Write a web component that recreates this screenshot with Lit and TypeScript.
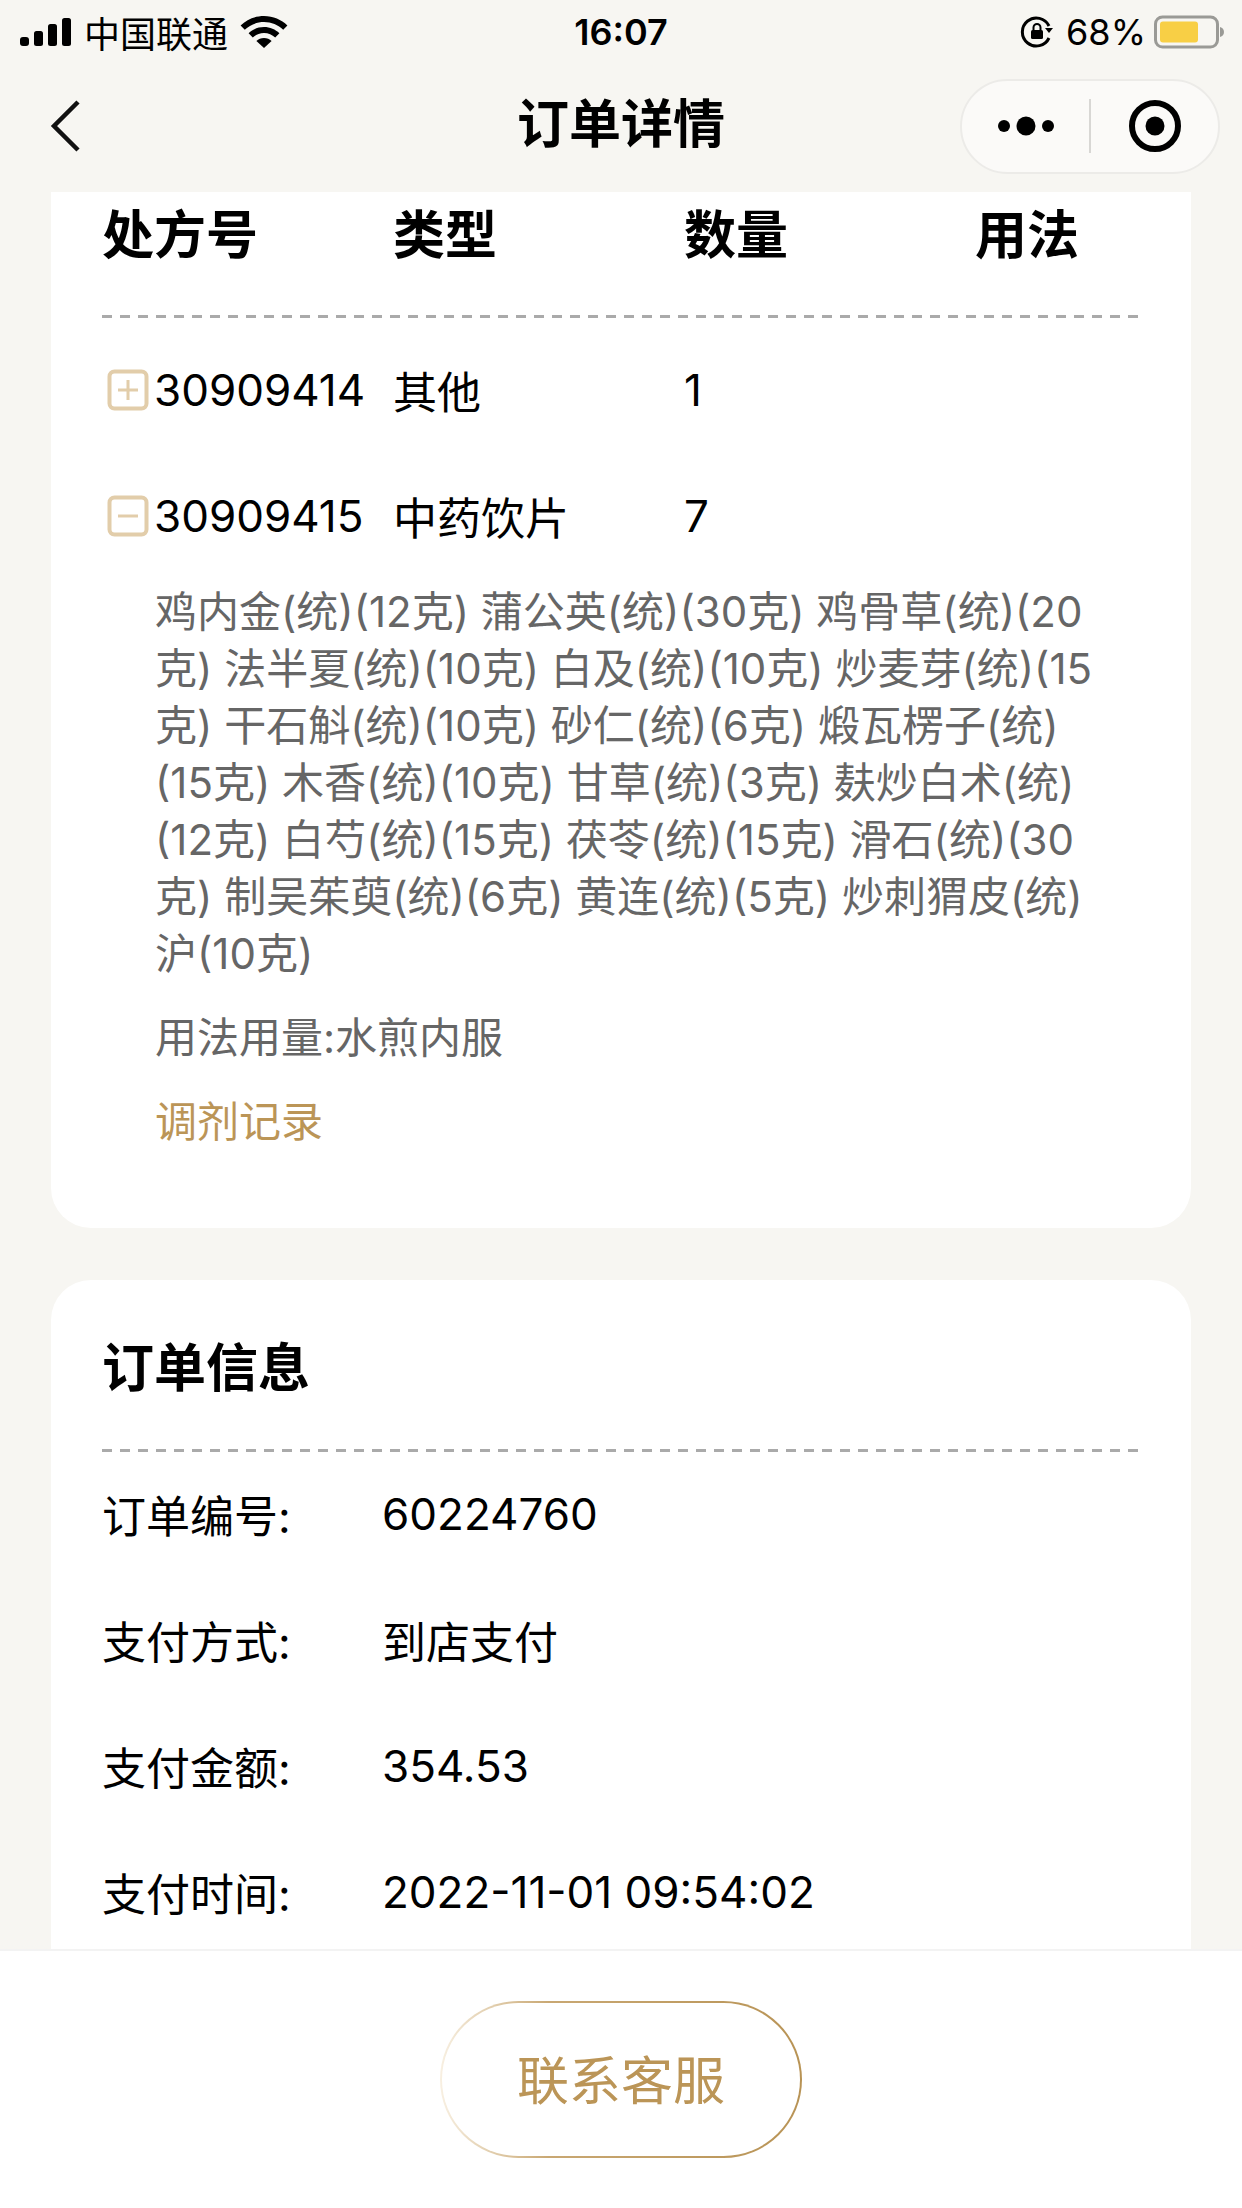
import { LitElement, html, css } from 'lit';
import { customElement } from 'lit/decorators.js';

const DETAIL_LINES = [
  '鸡内金(统)(12克) 蒲公英(统)(30克) 鸡骨草(统)(20',
  '克) 法半夏(统)(10克) 白及(统)(10克) 炒麦芽(统)(15',
  '克) 干石斛(统)(10克) 砂仁(统)(6克) 煅瓦楞子(统)',
  '(15克) 木香(统)(10克) 甘草(统)(3克) 麸炒白术(统)',
  '(12克) 白芍(统)(15克) 茯苓(统)(15克) 滑石(统)(30',
  '克) 制吴茱萸(统)(6克) 黄连(统)(5克) 炒刺猬皮(统)',
  '沪(10克)',
];

const ORDER_INFO = [
  ['订单编号:', '60224760'],
  ['支付方式:', '到店支付'],
  ['支付金额:', '354.53'],
  ['支付时间:', '2022-11-01 09:54:02'],
];

@customElement('app-root')
export class AppRoot extends LitElement {
  static styles = css`
    :host {
      display: flex;
      flex-direction: column;
      width: 1242px;
      height: 2208px;
      overflow: hidden;
      background: #f7f6f2;
      color: #000;
      font-family: 'Inter', 'Noto Sans CJK SC', sans-serif;
    }

    .status {
      height: 64px;
      flex: none;
      display: grid;
      grid-template-columns: 1fr auto 1fr;
      align-items: center;
      font-size: 36px;
    }
    .status-left {
      display: flex;
      align-items: center;
      padding-left: 20px;
      gap: 12px;
    }
    .status-right {
      display: flex;
      align-items: center;
      justify-content: flex-end;
      padding-right: 18px;
      gap: 12px;
    }
    .time {
      font-weight: 600;
      font-size: 36px;
    }
    .pct {
      margin-right: -4px;
    }

    .nav {
      height: 128px;
      flex: none;
      box-sizing: border-box;
      padding-bottom: 4px;
      display: grid;
      grid-template-columns: 1fr auto 1fr;
      align-items: center;
    }
    .back {
      padding-left: 50px;
      display: flex;
    }
    .title {
      font-size: 52px;
      font-weight: 700;
      line-height: 60px;
      margin-top: -2px;
    }
    .capsule-wrap {
      display: flex;
      justify-content: flex-end;
      padding-right: 22px;
    }
    .capsule {
      width: 260px;
      height: 95px;
      box-sizing: border-box;
      border: 2px solid #ecebe8;
      border-radius: 48px;
      background: #fbfaf8;
      display: grid;
      grid-template-columns: 1fr 2px 1fr;
      align-items: center;
      justify-items: center;
    }
    .capsule i {
      width: 2px;
      height: 54px;
      background: #d8d7d4;
    }

    .content {
      flex: 1;
      min-height: 0;
      overflow: hidden;
      display: flex;
      flex-direction: column;
      gap: 52px;
      padding: 0 51px;
    }
    .card {
      flex: none;
      background: #fff;
      padding: 0 51px;
    }
    .card-rx {
      border-radius: 0 0 40px 40px;
      padding-bottom: 78px;
    }
    .card-order {
      border-radius: 40px 40px 0 0;
      padding-bottom: 200px;
    }

    .dash {
      height: 3px;
      margin-bottom: -1px;
      background: repeating-linear-gradient(to right, #aaa 0 10px, transparent 10px 18px);
    }

    .cols {
      display: grid;
      grid-template-columns: 291px 291px 291px 1fr;
      align-items: center;
    }
    .thead {
      height: 123px;
      align-items: start;
      padding-top: 14px;
      box-sizing: border-box;
      font-size: 52px;
      line-height: 60px;
      font-weight: 700;
    }
    .rows {
      padding-top: 10px;
    }
    .row {
      height: 126px;
      font-size: 44px;
    }
    .rx-no {
      display: flex;
      align-items: center;
      gap: 5px;
      margin-left: 5px;
      margin-right: -20px;
    }

    .detail {
      padding: 4px 0 0 53px;
      color: #666;
      font-size: 42px;
      line-height: 57px;
    }
    .detail-line {
      white-space: pre;
    }
    .usage {
      margin-top: 27px;
    }
    .record {
      margin-top: 27px;
      color: #bb9557;
    }

    .order-title {
      height: 169px;
      box-sizing: border-box;
      padding-top: 59px;
      font-size: 52px;
      line-height: 60px;
      font-weight: 700;
    }
    .info-row {
      height: 126px;
      display: flex;
      align-items: center;
      font-size: 44px;
    }
    .info-label {
      width: 280px;
      flex: none;
    }

    .footer {
      height: 259px;
      flex: none;
      box-sizing: border-box;
      border-top: 2px solid #f3f3f3;
      background: #fff;
      display: flex;
      justify-content: center;
      padding-top: 50px;
    }
    .btn-border {
      width: 362px;
      height: 157px;
      box-sizing: border-box;
      padding: 2px;
      border-radius: 79px;
      background: linear-gradient(to right, #f8f0e2 0%, #c9a873 30%, #b89355 100%);
    }
    .btn {
      height: 100%;
      box-sizing: border-box;
      padding-bottom: 4px;
      border-radius: 77px;
      background: #fff;
      color: #bb9557;
      font-size: 52px;
      display: flex;
      align-items: center;
      justify-content: center;
    }
  `;

  renderBox(minus: boolean) {
    return html`<svg width="42" height="42" viewBox="0 0 42 42" fill="none" stroke="#e2cdaa">
      <rect x="2.5" y="2.5" width="37" height="37" rx="5" stroke-width="4"></rect>
      <path d="${minus ? 'M11 21H31' : 'M11 21H31M21 11V31'}" stroke-width="3"></path>
    </svg>`;
  }

  render() {
    return html`
      <div class="status">
        <div class="status-left">
          <svg width="52" height="28" viewBox="0 0 52 28" fill="#000">
            <rect x="0" y="19" width="9" height="9" rx="3"></rect>
            <rect x="14" y="13" width="9" height="15" rx="2.5"></rect>
            <rect x="28" y="6" width="9" height="22" rx="2.5"></rect>
            <rect x="42" y="0" width="9" height="28" rx="2.5"></rect>
          </svg>
          <span>中国联通</span>
          <svg width="48" height="32" viewBox="0 0 48 32" fill="#000">
            <path d="M24 0C14.8 0 6.6 3.6.6 9.4l4.2 4.4C9.8 9 16.6 6 24 6s14.2 3 19.2 7.8l4.2-4.4C41.4 3.6 33.2 0 24 0z"></path>
            <path d="M24 11c-6 0-11.4 2.4-15.4 6.2l4.2 4.4C15.7 18.8 19.6 17 24 17s8.3 1.8 11.2 4.6l4.2-4.4C35.4 13.4 30 11 24 11z"></path>
            <path d="M24 22c-3 0-5.6 1.2-7.6 3L24 32l7.6-7c-2-1.800-4.600-3-7.600-3z"></path>
          </svg>
        </div>
        <div class="time">16:07</div>
        <div class="status-right">
          <svg width="34" height="34" viewBox="0 0 34 34" fill="none" stroke="#000">
            <path d="M29 23A14 14 0 1 1 29 11" stroke-width="3"></path>
            <path d="M25 13h8l-4 5z" fill="#000" stroke="none"></path>
            <rect x="11" y="15" width="12" height="9" rx="1.500" fill="#000" stroke="none"></rect>
            <path d="M13.500 15v-2.500a3.500 3.500 0 0 1 7 0V15" stroke-width="2"></path>
          </svg>
          <span class="pct">68%</span>
          <svg width="70" height="34" viewBox="0 0 70 34">
            <rect x="1.500" y="2" width="62" height="30" rx="7" fill="none" stroke="#9a9a96" stroke-width="3"></rect>
            <rect x="6" y="6.500" width="38" height="21" rx="3" fill="#f8cf45"></rect>
            <path d="M66 12c2.500.5 4 2.500 4 5s-1.500 4.500-4 5z" fill="#9a9a96"></path>
          </svg>
        </div>
      </div>

      <div class="nav">
        <div class="back">
          <svg width="32" height="52" viewBox="0 0 32 52" fill="none" stroke="#111" stroke-width="4.500">
            <path d="M28 2L4 26l24 24"></path>
          </svg>
        </div>
        <div class="title">订单详情</div>
        <div class="capsule-wrap">
          <div class="capsule">
            <svg width="58" height="24" viewBox="0 0 58 24" fill="#000">
              <circle cx="7" cy="12" r="6"></circle>
              <circle cx="29" cy="12" r="9.500"></circle>
              <circle cx="51" cy="12" r="6"></circle>
            </svg>
            <i></i>
            <svg width="54" height="54" viewBox="0 0 54 54" fill="none">
              <circle cx="27" cy="27" r="23" stroke="#000" stroke-width="6"></circle>
              <circle cx="27" cy="27" r="9.500" fill="#000"></circle>
            </svg>
          </div>
        </div>
      </div>

      <div class="content">
        <section class="card card-rx">
          <div class="cols thead">
            <div>处方号</div>
            <div>类型</div>
            <div>数量</div>
            <div>用法</div>
          </div>
          <div class="dash"></div>
          <div class="rows">
            <div class="cols row">
              <div class="rx-no">${this.renderBox(false)}<span>30909414</span></div>
              <div>其他</div>
              <div>1</div>
              <div></div>
            </div>
            <div class="cols row">
              <div class="rx-no">${this.renderBox(true)}<span>30909415</span></div>
              <div>中药饮片</div>
              <div>7</div>
              <div></div>
            </div>
          </div>
          <div class="detail">
            ${DETAIL_LINES.map((line) => html`<div class="detail-line">${line}</div>`)}
            <div class="usage">用法用量:水煎内服</div>
            <div class="record">调剂记录</div>
          </div>
        </section>

        <section class="card card-order">
          <div class="order-title">订单信息</div>
          <div class="dash"></div>
          ${ORDER_INFO.map(
            ([label, value]) => html`
              <div class="info-row">
                <div class="info-label">${label}</div>
                <div>${value}</div>
              </div>
            `
          )}
        </section>
      </div>

      <div class="footer">
        <div class="btn-border"><div class="btn">联系客服</div></div>
      </div>
    `;
  }
}
